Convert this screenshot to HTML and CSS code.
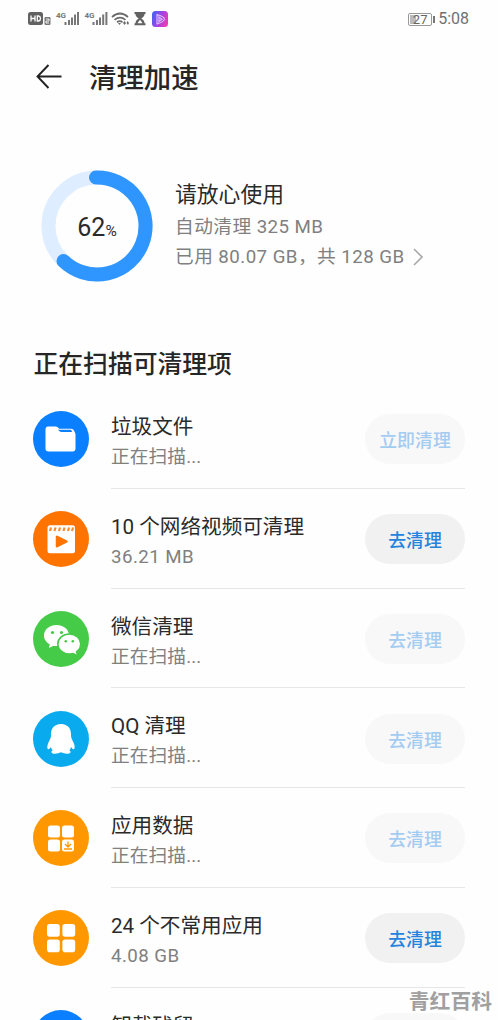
FILE: index.html
```html
<!DOCTYPE html>
<html lang="zh-CN">
<head>
<meta charset="utf-8">
<title>清理加速</title>
<link rel="stylesheet" href="styles.css">
</head>
<body>
<div class="screen">
  <div class="status">
    <svg class="status-icons" width="150" height="20" viewBox="0 0 150 20">
      <rect x="0" y="3" width="15" height="13" rx="2.5" fill="#626262"/>
      <path d="M3 6.5v6M7 6.5v6M3 9.5h4M9.3 7v5h1.2q2-.3 2-2.5t-2-2.5z" fill="none" stroke="#fff" stroke-width="1.3"/>
      <rect x="16.5" y="8" width="6" height="8" rx="1.2" fill="#777"/>
      <path d="M18 10h3v2h-3v2h3" fill="none" stroke="#fff" stroke-width=".9"/>
      <text class="net" x="28" y="9">4G</text>
      <path fill="#777" d="M36.500 13h2v3h-2zM40 11h2v5h-2zM43 8.500h2v7.500h-2zM46 5.500h2v10.500h-2zM49 3h2v13h-2z"/>
      <text class="net" x="56.500" y="9">4G</text>
      <path fill="#777" d="M64.500 13h2v3h-2zM68 11h2v5h-2zM71 8.500h2v7.500h-2zM74.200 5.500h2v10.500h-2zM77.400 3h2v13h-2z"/>
      <path d="M84 8q8-7 16 0M86.500 10.800q5.500-4.500 11 0M89 13.300q3-2.200 5.500 0" fill="none" stroke="#6b6b6b" stroke-width="1.7"/>
      <path d="M90 14h3l-1.500 2zM95 14l1.500-2 1.500 2-1.500 2zM98.500 14l1-2 1.500 2-1 2z" fill="#6b6b6b"/>
      <path d="M106.500 3h11v2h-1c0 2-1.200 3.300-3.200 4.500 2 1.200 3.200 2.800 3.200 4.800h1v2h-11v-2h1c0-2 1.200-3.600 3.200-4.800-2-1.200-3.200-2.500-3.200-4.500h-1z" fill="#626262"/>
      <path d="M112 10.800l2.500 3.400h-5z" fill="#fff"/>
      <defs><linearGradient id="app" x1="0" y1=".3" x2="1" y2=".7"><stop stop-color="#4b61ed"/><stop offset=".5" stop-color="#a442e5"/><stop offset="1" stop-color="#f13caf"/></linearGradient></defs>
      <rect x="124" y="2" width="16" height="16" rx="3.500" fill="url(#app)"/>
      <path d="M129 5.500q7 2 7.500 4.500-.5 3-7.500 4.800zM131 8v4.500l3-2.300z" fill="none" stroke="#d7bbff" stroke-width="1.200"/>
    </svg>
    <div class="status-right">
      <span class="battery"><i class="level"></i><b>27</b></span><span>5:08</span>
    </div>
  </div>
  <header class="header">
    <svg width="28" height="26" viewBox="0 0 28 26"><path d="M26.500 12.500H3M13.500 1L2.500 12.500 13.500 24" fill="none" stroke="#222" stroke-width="1.900"/></svg>
    <h1>清理加速</h1>
  </header>
  <section class="summary">
    <div class="ring">
      <svg width="112" height="112" viewBox="0 0 112 112" fill="none" stroke-width="14">
        <circle cx="56" cy="56" r="48.500" stroke="#deedff"/>
        <path d="M55 7.500A48.500 48.500 0 1 1 22.500 91" stroke="#3096ff" stroke-linecap="round"/>
      </svg>
      <div class="percent">62<small>%</small></div>
    </div>
    <div class="usage">
      <h2>请放心使用</h2>
      <p>自动清理 325 MB</p>
      <p>已用 80.07 GB，共 128 GB<svg width="12" height="20" viewBox="0 0 12 20"><path d="M2 2l8 8-8 8" fill="none" stroke="#aaa" stroke-width="1.700"/></svg></p>
    </div>
  </section>
  <h2 class="section-title">正在扫描可清理项</h2>
  <main class="list">
    <div class="row">
      <svg class="icon" viewBox="0 0 56 56"><circle cx="28" cy="28" r="28" fill="#0a7fff"/><path d="M15 15.500h7.500q1.500 0 2.500 1l1.200 1.200h12q2 0 2.800 1.800l1.500 3.500v14.500q0 3-3 3H15.500q-3 0-3-3v-19q0-3 2.500-3z" fill="#fff"/><path d="M25 18.700h13l1.200 2.200H28.500q-1.700 0-3.500-2.200" fill="#0a7fff"/></svg>
      <div class="body"><div class="text"><h3>垃圾文件</h3><p class="scanning">正在扫描...</p></div><button class="btn" disabled>立即清理</button></div>
    </div>
    <div class="row">
      <svg class="icon" viewBox="0 0 56 56"><circle cx="28" cy="28" r="28" fill="#ff7300"/><rect x="14.500" y="14.300" width="27.500" height="28" rx="2.500" fill="#fff"/><path d="M18 16.500l-1 3.500M22.500 16.500l-1 3.500M27 16.500l-1 3.500M31.500 16.500l-1 3.500M36 16.500l-1 3.500M40 16.500l-1 3.500" stroke="#ff8a2b" stroke-width="2.200"/><path d="M24 25.800v9.400l9.500-4.700z" fill="#ff7300" stroke="#ff7300" stroke-width="2.500" stroke-linejoin="round"/></svg>
      <div class="body"><div class="text"><h3>10 个网络视频可清理</h3><p>36.21 MB</p></div><button class="btn">去清理</button></div>
    </div>
    <div class="row">
      <svg class="icon" viewBox="0 0 56 56"><circle cx="28" cy="28" r="28" fill="#46cb48"/><ellipse cx="23.500" cy="24.500" rx="12.500" ry="10.500" fill="#fff"/><path d="M17 32l-1 5 6-3z" fill="#fff"/><ellipse cx="36.300" cy="33" rx="11.500" ry="10" fill="#fff" stroke="#46cb48" stroke-width="1.600"/><path d="M39 41l4.500 2.500-1-4z" fill="#fff"/><g fill="#46cb48"><circle cx="19.500" cy="21.500" r="1.600"/><circle cx="28.500" cy="21.500" r="1.600"/><circle cx="32.800" cy="30.200" r="1.300"/><circle cx="39.800" cy="30.200" r="1.300"/></g></svg>
      <div class="body"><div class="text"><h3>微信清理</h3><p class="scanning">正在扫描...</p></div><button class="btn" disabled>去清理</button></div>
    </div>
    <div class="row">
      <svg class="icon" viewBox="0 0 56 56"><circle cx="28" cy="28" r="28" fill="#0aabee"/><path d="M28 13c-7 0-10.500 5-10 11.500 0 3-1.500 4.500-2.700 7.500-1.300 3.200-1.300 6 .2 6.300 1 .1 2-2 2.500-2.300.2 1.500 1 2.500 1.700 3.300-2 1-1.700 3.200 1.300 3.400 2.500.2 5-.3 7-1.400 2 1.100 4.500 1.600 7 1.400 3-.2 3.300-2.400 1.300-3.400.7-.8 1.500-1.800 1.700-3.300.5.300 1.500 2.400 2.500 2.300 1.500-.3 1.500-3.100.2-6.300-1.200-3-2.700-4.500-2.700-7.500C38.500 18 35 13 28 13z" fill="#fff"/></svg>
      <div class="body"><div class="text"><h3>QQ 清理</h3><p class="scanning">正在扫描...</p></div><button class="btn" disabled>去清理</button></div>
    </div>
    <div class="row">
      <svg class="icon" viewBox="0 0 56 56"><circle cx="28" cy="28" r="28" fill="#ff9800"/><g fill="#fff"><rect x="15" y="15.500" width="12" height="12" rx="2.500"/><rect x="29" y="15.500" width="12" height="12" rx="2.500"/><rect x="15" y="29.500" width="12" height="12" rx="2.500"/><rect x="29" y="29.500" width="12" height="12" rx="2.500"/></g><path d="M35 31.500v5M32 34l3 3 3-3M31 39h8" fill="none" stroke="#ff9800" stroke-width="1.300"/></svg>
      <div class="body"><div class="text"><h3>应用数据</h3><p class="scanning">正在扫描...</p></div><button class="btn" disabled>去清理</button></div>
    </div>
    <div class="row">
      <svg class="icon" viewBox="0 0 56 56"><circle cx="28" cy="28" r="28" fill="#ff9800"/><g fill="#fff"><rect x="14" y="14" width="12.800" height="12.800" rx="2.800"/><rect x="29.400" y="14" width="12.800" height="12.800" rx="2.800"/><rect x="14" y="29.400" width="12.800" height="12.800" rx="2.800"/><rect x="29.400" y="29.400" width="12.800" height="12.800" rx="2.800"/></g></svg>
      <div class="body"><div class="text"><h3>24 个不常用应用</h3><p>4.08 GB</p></div><button class="btn">去清理</button></div>
    </div>
    <div class="row">
      <svg class="icon" viewBox="0 0 56 56"><circle cx="28" cy="28" r="28" fill="#0a7fff"/></svg>
      <div class="body"><div class="text"><h3>卸载残留</h3></div><button class="btn" disabled></button></div>
    </div>
  </main>
  <div class="watermark">青红百科</div>
</div>
</body>
</html>
```
FILE: styles.css
```css
* { box-sizing: border-box; margin: 0; padding: 0; }
body { background: #fefefe; }
.screen {
  position: relative;
  width: 498px;
  height: 1020px;
  overflow: hidden;
  font-family: Roboto, "Noto Sans CJK SC", sans-serif;
  color: #2a2a2a;
}
svg { display: block; flex: none; }
h1, h2, h3 { font-weight: 400; }
.status {
  height: 38px;
  padding: 0 29px 0 28px;
  display: flex;
  justify-content: space-between;
  align-items: center;
}
.net { font: 700 8px Roboto, sans-serif; fill: #777; }
.status-right { display: flex; align-items: center; gap: 6px; font-size: 16px; line-height: 20px; color: #707070; }
.battery {
  position: relative;
  display: flex;
  align-items: center;
  justify-content: center;
  width: 24px;
  height: 13px;
  border: 1px solid #999;
  border-radius: 2px;
}
.battery::after { content: ""; position: absolute; right: -4px; top: 2px; width: 2px; height: 7px; background: #777; }
.battery b { position: relative; font-size: 13px; font-weight: 400; line-height: 13px; color: #666; }
.level { position: absolute; left: 1px; top: 1px; width: 6px; height: 9px; background: #bbb; }
.header { height: 78px; display: flex; align-items: center; padding-left: 35px; gap: 26px; }
.header h1 { padding-top: 3px; font-size: 27.400px; line-height: 40px; font-weight: 500; color: #262626; }
.summary { height: 221px; display: flex; padding: 54px 0 0 41px; gap: 22px; }
.ring { position: relative; width: 112px; height: 112px; }
.percent { position: absolute; inset: 0; display: flex; align-items: baseline; justify-content: center; font-size: 25px; line-height: 115px; }
.percent small { font-size: 15.500px; }
.usage { padding-top: 8px; }
.usage h2 { font-size: 21.800px; line-height: 34px; }
.usage p { display: flex; align-items: center; gap: 8px; font-size: 18.700px; line-height: 30px; letter-spacing: .45px; color: #808080; }
.section-title { height: 52px; padding-left: 33.500px; font-size: 24.800px; line-height: 55px; font-weight: 500; color: #262626; }
.list { padding: 0 33px; }
.row { height: 99.750px; display: flex; gap: 22px; }
.icon { width: 56px; height: 56px; margin-top: 22.300px; }
.body { flex: 1; display: flex; justify-content: space-between; border-bottom: 1px solid #e6e6e6; }
.text { padding-top: 23px; }
.text h3 { font-size: 20.600px; line-height: 30px; }
.text p { font-size: 18.700px; line-height: 30px; letter-spacing: .45px; color: #808080; }
.text .scanning { letter-spacing: .1px; }
.btn {
  width: 100px;
  height: 50px;
  margin-top: 25.300px;
  border: 0;
  border-radius: 25px;
  background: #f1f1f1;
  color: #2583dc;
  font: 500 17.900px Roboto, "Noto Sans CJK SC", sans-serif;
}
.btn:disabled { background: #f8f8f8; color: #a4cbf0; }
.watermark {
  position: absolute;
  right: 6px;
  top: 986px;
  font-size: 20.800px;
  line-height: 32px;
  font-weight: 700;
  color: #a0a0a0;
}
```
